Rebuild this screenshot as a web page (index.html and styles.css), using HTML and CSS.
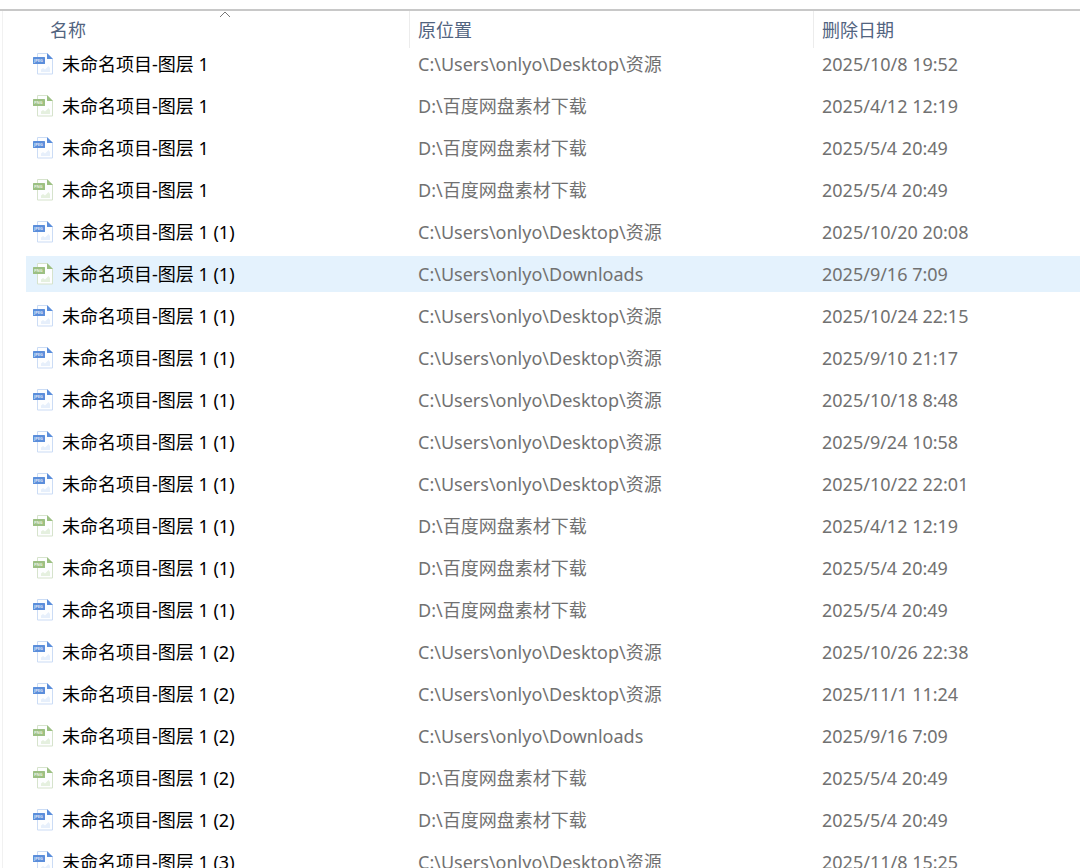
FILE: index.html
```
<!DOCTYPE html>
<html lang="zh-CN">
<head>
<meta charset="utf-8">
<title>回收站</title>
<meta name="viewport" content="width=device-width, initial-scale=1">
<link rel="stylesheet" href="styles.css">
</head>
<body>
<svg class="sprite" aria-hidden="true">
  <symbol id="file" viewBox="0 0 20 22">
    <path class="page" d="M4.500 .5H14L19.500 6V21H4.500Z"/>
    <path class="fold" d="M14 0L20 6H14Z"/>
    <path class="scene" d="M8 19V16.500L10 15L12 16.500L15.500 13L17 15V19Z"/>
    <rect class="tag" x="0" y="4" width="12" height="7" rx=".5"/>
  </symbol>
</svg>
<main class="list">
<table class="files">
<colgroup><col class="col-name"><col class="col-place"><col class="col-date"></colgroup>
<thead>
<tr>
<th scope="col" aria-sort="ascending"><button class="head head-name" type="button">名称<svg class="sort" viewBox="0 0 12 7" aria-hidden="true"><path d="M1 6L6 1L11 6"/></svg></button></th>
<th scope="col"><button class="head" type="button">原位置</button></th>
<th scope="col"><button class="head" type="button">删除日期</button></th>
</tr>
</thead>
<tbody>
<tr class="jpeg"><td><div class="cell name"><svg class="icon"><use href="#file"/><text x="1" y="9">JPEG</text></svg>未命名项目-图层 1</div></td><td><div class="cell">C:\Users\onlyo\Desktop\资源</div></td><td><div class="cell">2025/10/8 19:52</div></td></tr>
<tr class="png"><td><div class="cell name"><svg class="icon"><use href="#file"/><text x="1" y="9">PNG</text></svg>未命名项目-图层 1</div></td><td><div class="cell">D:\百度网盘素材下载</div></td><td><div class="cell">2025/4/12 12:19</div></td></tr>
<tr class="jpeg"><td><div class="cell name"><svg class="icon"><use href="#file"/><text x="1" y="9">JPEG</text></svg>未命名项目-图层 1</div></td><td><div class="cell">D:\百度网盘素材下载</div></td><td><div class="cell">2025/5/4 20:49</div></td></tr>
<tr class="png"><td><div class="cell name"><svg class="icon"><use href="#file"/><text x="1" y="9">PNG</text></svg>未命名项目-图层 1</div></td><td><div class="cell">D:\百度网盘素材下载</div></td><td><div class="cell">2025/5/4 20:49</div></td></tr>
<tr class="jpeg"><td><div class="cell name"><svg class="icon"><use href="#file"/><text x="1" y="9">JPEG</text></svg>未命名项目-图层 1 (1)</div></td><td><div class="cell">C:\Users\onlyo\Desktop\资源</div></td><td><div class="cell">2025/10/20 20:08</div></td></tr>
<tr class="png active"><td><div class="cell name"><svg class="icon"><use href="#file"/><text x="1" y="9">PNG</text></svg>未命名项目-图层 1 (1)</div></td><td><div class="cell">C:\Users\onlyo\Downloads</div></td><td><div class="cell">2025/9/16 7:09</div></td></tr>
<tr class="jpeg"><td><div class="cell name"><svg class="icon"><use href="#file"/><text x="1" y="9">JPEG</text></svg>未命名项目-图层 1 (1)</div></td><td><div class="cell">C:\Users\onlyo\Desktop\资源</div></td><td><div class="cell">2025/10/24 22:15</div></td></tr>
<tr class="jpeg"><td><div class="cell name"><svg class="icon"><use href="#file"/><text x="1" y="9">JPEG</text></svg>未命名项目-图层 1 (1)</div></td><td><div class="cell">C:\Users\onlyo\Desktop\资源</div></td><td><div class="cell">2025/9/10 21:17</div></td></tr>
<tr class="jpeg"><td><div class="cell name"><svg class="icon"><use href="#file"/><text x="1" y="9">JPEG</text></svg>未命名项目-图层 1 (1)</div></td><td><div class="cell">C:\Users\onlyo\Desktop\资源</div></td><td><div class="cell">2025/10/18 8:48</div></td></tr>
<tr class="jpeg"><td><div class="cell name"><svg class="icon"><use href="#file"/><text x="1" y="9">JPEG</text></svg>未命名项目-图层 1 (1)</div></td><td><div class="cell">C:\Users\onlyo\Desktop\资源</div></td><td><div class="cell">2025/9/24 10:58</div></td></tr>
<tr class="jpeg"><td><div class="cell name"><svg class="icon"><use href="#file"/><text x="1" y="9">JPEG</text></svg>未命名项目-图层 1 (1)</div></td><td><div class="cell">C:\Users\onlyo\Desktop\资源</div></td><td><div class="cell">2025/10/22 22:01</div></td></tr>
<tr class="png"><td><div class="cell name"><svg class="icon"><use href="#file"/><text x="1" y="9">PNG</text></svg>未命名项目-图层 1 (1)</div></td><td><div class="cell">D:\百度网盘素材下载</div></td><td><div class="cell">2025/4/12 12:19</div></td></tr>
<tr class="png"><td><div class="cell name"><svg class="icon"><use href="#file"/><text x="1" y="9">PNG</text></svg>未命名项目-图层 1 (1)</div></td><td><div class="cell">D:\百度网盘素材下载</div></td><td><div class="cell">2025/5/4 20:49</div></td></tr>
<tr class="jpeg"><td><div class="cell name"><svg class="icon"><use href="#file"/><text x="1" y="9">JPEG</text></svg>未命名项目-图层 1 (1)</div></td><td><div class="cell">D:\百度网盘素材下载</div></td><td><div class="cell">2025/5/4 20:49</div></td></tr>
<tr class="jpeg"><td><div class="cell name"><svg class="icon"><use href="#file"/><text x="1" y="9">JPEG</text></svg>未命名项目-图层 1 (2)</div></td><td><div class="cell">C:\Users\onlyo\Desktop\资源</div></td><td><div class="cell">2025/10/26 22:38</div></td></tr>
<tr class="jpeg"><td><div class="cell name"><svg class="icon"><use href="#file"/><text x="1" y="9">JPEG</text></svg>未命名项目-图层 1 (2)</div></td><td><div class="cell">C:\Users\onlyo\Desktop\资源</div></td><td><div class="cell">2025/11/1 11:24</div></td></tr>
<tr class="png"><td><div class="cell name"><svg class="icon"><use href="#file"/><text x="1" y="9">PNG</text></svg>未命名项目-图层 1 (2)</div></td><td><div class="cell">C:\Users\onlyo\Downloads</div></td><td><div class="cell">2025/9/16 7:09</div></td></tr>
<tr class="png"><td><div class="cell name"><svg class="icon"><use href="#file"/><text x="1" y="9">PNG</text></svg>未命名项目-图层 1 (2)</div></td><td><div class="cell">D:\百度网盘素材下载</div></td><td><div class="cell">2025/5/4 20:49</div></td></tr>
<tr class="jpeg"><td><div class="cell name"><svg class="icon"><use href="#file"/><text x="1" y="9">JPEG</text></svg>未命名项目-图层 1 (2)</div></td><td><div class="cell">D:\百度网盘素材下载</div></td><td><div class="cell">2025/5/4 20:49</div></td></tr>
<tr class="jpeg"><td><div class="cell name"><svg class="icon"><use href="#file"/><text x="1" y="9">JPEG</text></svg>未命名项目-图层 1 (3)</div></td><td><div class="cell">C:\Users\onlyo\Desktop\资源</div></td><td><div class="cell">2025/11/8 15:25</div></td></tr>
</tbody>
</table>
</main>
</body>
</html>
```
FILE: styles.css
```
* { box-sizing: border-box; }
body {
  margin: 0;
  padding-top: 9px;
  height: 100vh;
  overflow: hidden;
  background: #fff;
  color: #717171;
  font: 18px/24px "Noto Sans", "Noto Sans CJK SC", sans-serif;
}
.sprite { position: absolute; width: 0; height: 0; }
.list {
  height: 100%;
  border-top: 2px solid #c8c8c8;
  padding-left: 26px;
  background: linear-gradient(#f1f1f1, #f1f1f1) 2px 0 / 1px 100% no-repeat;
}
.files {
  width: 100%;
  table-layout: fixed;
  border-collapse: separate;
  border-spacing: 0;
}
.col-name { width: 383px; }
.col-place { width: 404px; }
th, td { padding: 0; text-align: left; font-weight: 400; white-space: nowrap; }
th { height: 32px; vertical-align: top; }
td { height: 42px; vertical-align: middle; }
.head {
  position: relative;
  display: flex;
  align-items: center;
  width: 100%;
  height: 37px;
  margin-bottom: -5px;
  padding: 0 0 0 8px;
  border: 0;
  border-left: 1px solid #ececec;
  background: none;
  color: #52647f;
  font: inherit;
}
.head-name { padding-left: 24px; border-left: 0; }
.sort {
  position: absolute;
  top: 0;
  left: calc(50% + 1px);
  width: 12px;
  height: 7px;
  fill: none;
  stroke: #777;
}
.cell {
  display: flex;
  align-items: center;
  height: 36px;
  padding-left: 9px;
}
.name { gap: 9px; padding-left: 7px; color: #000; }
.active .cell { background: #e4f2fd; }
.icon { flex: none; width: 20px; height: 22px; }
.icon text { font: 700 4px "Open Sans", sans-serif; fill: #fff; opacity: .8; }
.page { fill: #fdfeff; stroke: var(--edge); }
.fold, .tag { fill: var(--ink); }
.scene { fill: var(--pale); }
.jpeg { --ink: #5b8edb; --edge: #cbdcf5; --pale: #e6effb; }
.png { --ink: #9cc083; --edge: #d6e3cc; --pale: #e5f0df; }
```
